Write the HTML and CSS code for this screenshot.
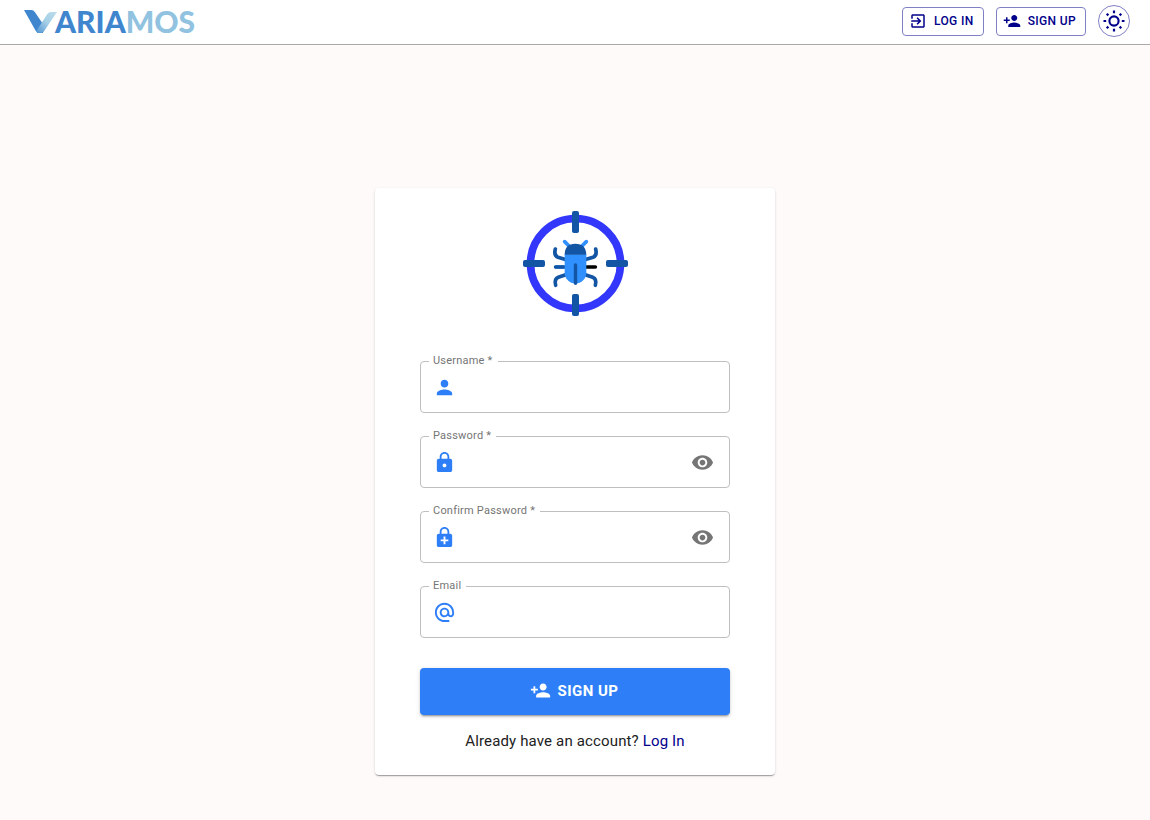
FILE: index.html
```html
<!DOCTYPE html>
<html lang="en">
<head>
<meta charset="utf-8">
<meta name="viewport" content="width=device-width, initial-scale=1">
<title>VariaMos - Sign Up</title>
<link rel="stylesheet" href="styles.css">
</head>
<body>
<header class="topbar">
  <a class="brand" href="#" aria-label="VARIAMOS">
    <svg class="brand-mark" viewBox="0 0 99 69" aria-hidden="true">
      <defs>
        <linearGradient id="arm" x1="0" y1="1" x2="1" y2="0"><stop offset="0" stop-color="#4f93d2"/><stop offset=".5" stop-color="#a5cfe6"/><stop offset="1" stop-color="#bcdcec"/></linearGradient>
      </defs>
      <path fill="#3f86cf" d="M0 0h22q7 0 11 7l26 38-2 24H46q-7 0-11-7z"/>
      <path fill="url(#arm)" d="M37 63L70 12q4-6 12-6h17L60 64q-4 5-12 5h-8z"/>
    </svg>
    <span class="brand-text">ARIA<span class="brand-light">MOS</span></span>
  </a>
  <nav class="actions">
    <button class="outlined" type="button">
      <svg class="icon-small" viewBox="0 0 24 24" aria-hidden="true"><path d="M10.090 15.590L11.500 17l5-5-5-5-1.410 1.410L12.670 11H3v2h9.670l-2.580 2.590zM19 3H5c-1.110 0-2 .9-2 2v4h2V5h14v14H5v-4H3v4c0 1.100.89 2 2 2h14c1.100 0 2-.9 2-2V5c0-1.100-.9-2-2-2z"/></svg>
      LOG IN
    </button>
    <button class="outlined" type="button">
      <svg class="icon-small" viewBox="0 0 24 24" aria-hidden="true"><path d="M15 12c2.210 0 4-1.790 4-4s-1.790-4-4-4-4 1.790-4 4 1.790 4 4 4zm-9-2V7H4v3H1v2h3v3h2v-3h3v-2H6zm9 4c-2.670 0-8 1.340-8 4v2h16v-2c0-2.660-5.330-4-8-4z"/></svg>
      SIGN UP
    </button>
    <button class="theme" type="button" aria-label="Toggle theme">
      <svg class="icon-sun" viewBox="0 0 24 24" aria-hidden="true">
        <circle cx="12" cy="12" r="4.600" fill="none" stroke="currentColor" stroke-width="2.100"/>
        <path fill="none" stroke="currentColor" stroke-width="2.200" d="M12 1.500v2.700M12 19.800v2.700M1.500 12h2.700M19.800 12h2.700M4.700 4.700l1.700 1.700M17.600 17.600l1.700 1.700M4.700 19.300l1.700-1.700M17.600 6.400l1.700-1.700"/>
      </svg>
    </button>
  </nav>
</header>

<main class="page">
  <form class="card">
    <svg class="emblem" viewBox="0 0 315 315" role="img" aria-label="Bug target">
      <circle cx="157.500" cy="157.500" r="135" fill="none" stroke="#3237fb" stroke-width="23"/>
      <g fill="#1155a4">
        <rect x="147" y="0" width="21" height="66" rx="6"/>
        <rect x="147" y="249" width="21" height="66" rx="6"/>
        <rect x="0" y="147" width="66" height="21" rx="6"/>
        <rect x="249" y="147" width="66" height="21" rx="6"/>
      </g>
      <g fill="none" stroke-width="11" stroke-linecap="round">
        <path stroke="#3090fd" d="M125 92l13 13M190 92l-13 13"/>
        <path stroke="#1155a4" d="M97 114q-5 20 8 25l20 6M218 114q5 20-8 25l-20 6"/>
        <path stroke="#3090fd" d="M98 168h28"/>
        <path stroke="#1155a4" d="M98 168h24M98 223q-5-19 8-24l20-7M217 223q5-19-8-24l-20-7"/>
        <path stroke="#000" d="M188 168h29"/>
      </g>
      <path fill="#3090fd" d="M125 130h65v55a32.500 32.500 0 0 1-65 0z"/>
      <path fill="#1155a4" d="M125 131q0-33 32-33t33 33z"/>
      <path fill="none" stroke="#1155a4" stroke-width="10" stroke-linecap="round" d="M157.500 162v55"/>
    </svg>

    <div class="fields">
      <div class="field">
        <label for="username">Username *</label>
        <svg class="icon" viewBox="0 0 24 24" aria-hidden="true"><path d="M12 12c2.210 0 4-1.790 4-4s-1.790-4-4-4-4 1.790-4 4 1.790 4 4 4zm0 2c-2.670 0-8 1.340-8 4v2h16v-2c0-2.660-5.330-4-8-4z"/></svg>
        <input id="username" type="text" required>
      </div>
      <div class="field">
        <label for="password">Password *</label>
        <svg class="icon" viewBox="0 0 24 24" aria-hidden="true"><path d="M18 8h-1V6c0-2.760-2.240-5-5-5S7 3.240 7 6v2H6c-1.100 0-2 .9-2 2v10c0 1.100.9 2 2 2h12c1.100 0 2-.9 2-2V10c0-1.100-.9-2-2-2zm-6 9c-1.100 0-2-.9-2-2s.9-2 2-2 2 .9 2 2-.9 2-2 2zm3.100-9H8.900V6c0-1.710 1.390-3.100 3.100-3.100s3.100 1.390 3.100 3.100v2z"/></svg>
        <input id="password" type="password" required>
        <button class="reveal" type="button" aria-label="Show password"><svg class="icon" viewBox="0 0 24 24" aria-hidden="true"><path d="M12 4.500C7 4.500 2.730 7.610 1 12c1.730 4.390 6 7.500 11 7.500s9.270-3.110 11-7.500c-1.730-4.390-6-7.500-11-7.500zM12 17c-2.760 0-5-2.240-5-5s2.240-5 5-5 5 2.240 5 5-2.240 5-5 5zm0-8c-1.660 0-3 1.340-3 3s1.340 3 3 3 3-1.340 3-3-1.340-3-3-3z"/></svg></button>
      </div>
      <div class="field">
        <label for="confirm">Confirm Password *</label>
        <svg class="icon" viewBox="0 0 24 24" aria-hidden="true"><path d="M18 8h-1V6c0-2.760-2.240-5-5-5S7 3.240 7 6v2H6c-1.100 0-2 .9-2 2v10c0 1.100.9 2 2 2h12c1.100 0 2-.9 2-2V10c0-1.100-.9-2-2-2zM8.900 6c0-1.710 1.390-3.100 3.100-3.100s3.100 1.390 3.100 3.100v2H8.900V6zM16 16h-3v3h-2v-3H8v-2h3v-3h2v3h3v2z"/></svg>
        <input id="confirm" type="password" required>
        <button class="reveal" type="button" aria-label="Show confirmation"><svg class="icon" viewBox="0 0 24 24" aria-hidden="true"><path d="M12 4.500C7 4.500 2.730 7.610 1 12c1.730 4.390 6 7.500 11 7.500s9.270-3.110 11-7.500c-1.730-4.390-6-7.500-11-7.500zM12 17c-2.760 0-5-2.240-5-5s2.240-5 5-5 5 2.240 5 5-2.240 5-5 5zm0-8c-1.660 0-3 1.340-3 3s1.340 3 3 3 3-1.340 3-3-1.340-3-3-3z"/></svg></button>
      </div>
      <div class="field">
        <label for="email">Email</label>
        <svg class="icon" viewBox="0 0 24 24" aria-hidden="true"><path d="M12 1.950c-5.520 0-10 4.480-10 10s4.480 10 10 10h5v-2h-5c-4.340 0-8-3.660-8-8s3.660-8 8-8 8 3.660 8 8v1.430c0 .79-.71 1.570-1.500 1.570s-1.500-.78-1.500-1.570v-1.430c0-2.760-2.240-5-5-5s-5 2.240-5 5 2.240 5 5 5c1.380 0 2.640-.56 3.540-1.470.65.89 1.770 1.470 2.960 1.470 1.970 0 3.500-1.600 3.500-3.570v-1.430c0-5.520-4.480-10-10-10zm0 13c-1.660 0-3-1.340-3-3s1.340-3 3-3 3 1.340 3 3-1.340 3-3 3z"/></svg>
        <input id="email" type="email">
      </div>
    </div>

    <button class="submit" type="submit">
      <svg class="icon-medium" viewBox="0 0 24 24" aria-hidden="true"><path d="M15 12c2.210 0 4-1.790 4-4s-1.790-4-4-4-4 1.790-4 4 1.790 4 4 4zm-9-2V7H4v3H1v2h3v3h2v-3h3v-2H6zm9 4c-2.670 0-8 1.340-8 4v2h16v-2c0-2.660-5.330-4-8-4z"/></svg>
      SIGN UP
    </button>
    <p class="hint">Already have an account? <a href="#">Log In</a></p>
  </form>
</main>
</body>
</html>
```

FILE: styles.css
```css
* { box-sizing: border-box; }

body {
  margin: 0;
  min-height: 100vh;
  background: #fffafa;
  color: #212121;
  font-family: Roboto, "Liberation Sans", sans-serif;
}

button, input { font: inherit; }
button { cursor: pointer; }
svg { display: block; flex: none; fill: currentColor; }
.icon { width: 23px; height: 23px; }
.icon-medium { width: 21px; height: 21px; }
.icon-small { width: 18px; height: 18px; }
.icon-sun { width: 24px; height: 24px; }

.topbar {
  display: flex;
  align-items: center;
  justify-content: space-between;
  height: 45px;
  padding: 0 20px 2px 24px;
  background: #fff;
  border-bottom: 1px solid #a9a9a9;
}

.brand { display: flex; align-items: center; text-decoration: none; }
.brand-mark { width: 33px; height: 23px; margin-right: -2px; }
.brand-text {
  color: #3f86cf;
  font: 900 30px/40px Lato, sans-serif;
}
.brand-light { color: #91c3e1; }

.actions { display: flex; align-items: center; gap: 12px; }
.outlined {
  display: flex;
  align-items: center;
  gap: 7px;
  height: 29px;
  padding: 0 9px 0 6px;
  border: 1px solid #8080c5;
  border-radius: 4px;
  background: #fff;
  color: #00008b;
  font-size: 12px;
  font-weight: 500;
  letter-spacing: 0.03em;
}
.theme {
  display: grid;
  place-items: center;
  width: 32px;
  height: 32px;
  padding: 0;
  border: 1px solid #8080c5;
  border-radius: 50%;
  background: #fff;
  color: #00008b;
}

.page {
  display: flex;
  justify-content: center;
  padding: 143px 16px 44px;
}
.card {
  display: flex;
  flex-direction: column;
  width: 100%;
  max-width: 400px;
  padding: 23px 45px 23px;
  border-radius: 4px;
  background: #fff;
  box-shadow: 0 2px 1px -1px rgba(0, 0, 0, .2), 0 1px 1px rgba(0, 0, 0, .14), 0 1px 3px rgba(0, 0, 0, .12);
}
.emblem { width: 105px; height: 105px; align-self: center; }

.fields { display: grid; gap: 23px; margin: 45px 0 30px; }
.field {
  position: relative;
  display: flex;
  align-items: center;
  height: 52px;
  padding: 0 15px 0 12px;
  border: 1px solid #bfbfbf;
  border-radius: 4px;
  color: #2e7ff7;
}
.field label {
  position: absolute;
  top: -9px;
  left: 8px;
  padding: 0 5px 0 4px;
  background: #fff;
  color: #757575;
  font-size: 11px;
  line-height: 16px;
  letter-spacing: 0.02em;
}
.field input {
  flex: 1;
  min-width: 0;
  padding: 8px;
  border: 0;
  outline: 0;
  background: transparent;
  color: #212121;
}
.reveal { padding: 0; border: 0; background: none; color: #757575; }

.submit {
  display: flex;
  align-items: center;
  justify-content: center;
  gap: 7px;
  height: 47px;
  padding: 0 2px 2px 0;
  border: 0;
  border-radius: 4px;
  background: #2e7ff7;
  color: #fff;
  font-size: 15px;
  font-weight: 700;
  letter-spacing: 0.03em;
  box-shadow: 0 3px 1px -2px rgba(0, 0, 0, .2), 0 2px 2px rgba(0, 0, 0, .14), 0 1px 5px rgba(0, 0, 0, .12);
}
.hint {
  margin: 15px 0 0;
  text-align: center;
  font-size: 15px;
  line-height: 22px;
  letter-spacing: 0.01em;
}
.hint a { color: #00008b; text-decoration: none; }
```
